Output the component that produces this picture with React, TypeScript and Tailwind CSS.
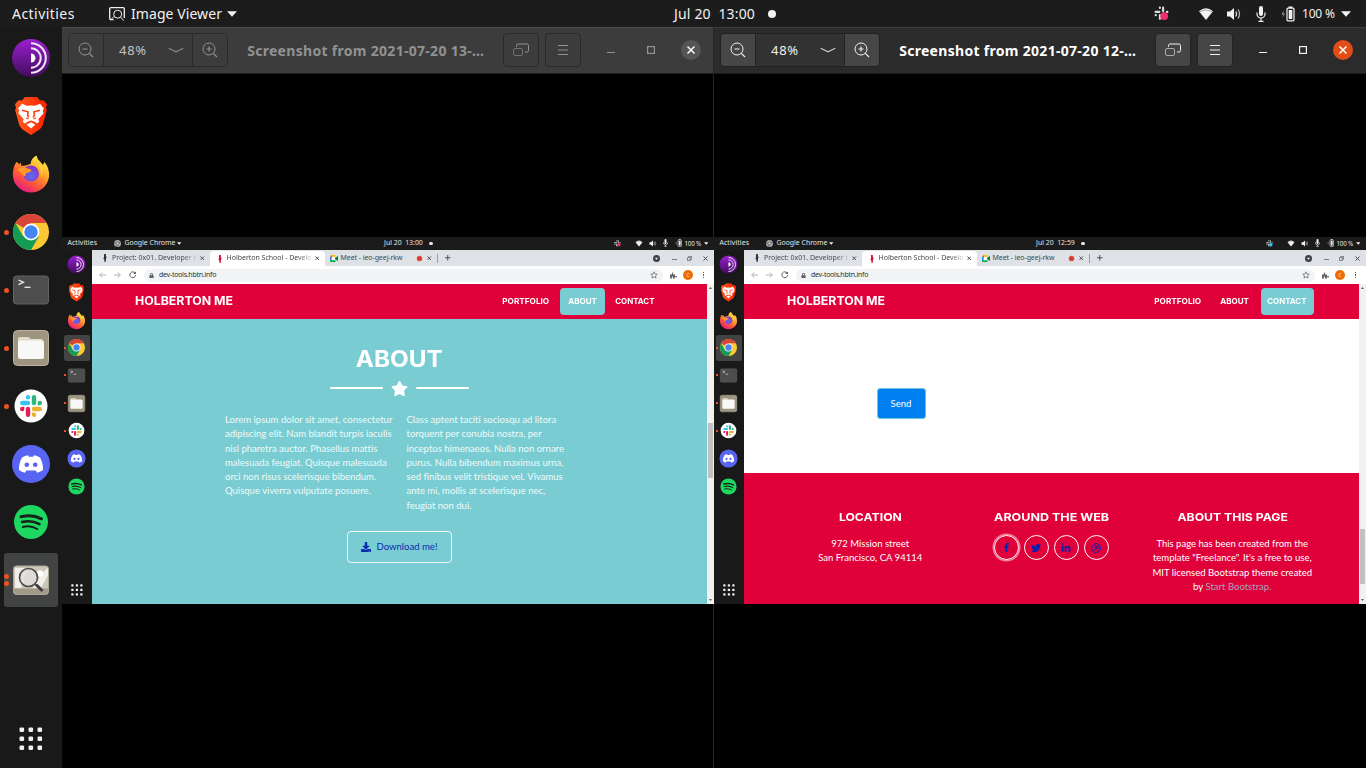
import type { ReactNode } from "react";
import {
  FaDownload,
  FaDribbble,
  FaFacebookF,
  FaLinkedinIn,
  FaLock,
  FaPuzzlePiece,
  FaStar,
  FaTwitter,
} from "react-icons/fa";

const U = 'font-["Noto_Sans",sans-serif]';
const M = 'font-["Inter",sans-serif] font-bold';

/* ---------- dock icons, all on a 40x40 grid ---------- */

function TorIcon() {
  return (
    <svg viewBox="0 0 40 40" className="size-full">
      <defs>
        <linearGradient id="tor" x1="0" y1="0" x2="0" y2="1">
          <stop offset="0" stopColor="#9a1fd0" />
          <stop offset="1" stopColor="#420c5d" />
        </linearGradient>
      </defs>
      <circle cx="20" cy="20" r="19" fill="url(#tor)" />
      <path d="M20 15.5a4.5 4.5 0 0 1 0 9z" fill="#fff" />
      <g fill="none" stroke="#f3e6fa" strokeWidth="2">
        <path d="M20 10.3a9.7 9.7 0 0 1 0 19.4" />
        <path d="M20 5.2a14.8 14.8 0 0 1 0 29.6" />
      </g>
    </svg>
  );
}

function BraveIcon() {
  return (
    <svg viewBox="0 0 40 40" className="size-full">
      <defs>
        <linearGradient id="brave" x1="0" x2="1">
          <stop offset="0" stopColor="#ff5a1f" />
          <stop offset="1" stopColor="#ff2000" />
        </linearGradient>
      </defs>
      <path
        d="M14 1h12l3 3.500 3.500-.3 3.500 4-1 3.500.8 2.500-4 14.500q-.8 3-3.300 4.700L20 39l-8.500-5.600Q9 31.700 8.200 28.700L4.200 14.200 5 11.700l-1-3.500 3.500-4 3.500.3z"
        fill="url(#brave)"
      />
      <path
        d="M20 9.500l4 .3 5-2 4 4.700-1.200 2 .8 2.700-5.300 6 .9 2.600-2 1.700-3-2.100L20 24.500l-3.200.9-3 2.100-2-1.700.9-2.600-5.300-6 .8-2.700-1.200-2 4-4.700 5 2z"
        fill="#fff"
      />
      <path d="M20 26.200l4.500 2.300-4.500 4-4.500-4z" fill="#fff" />
      <g fill="none" stroke="#ff4216" strokeWidth="1.700">
        <path d="M11 14.300l6 1.500-.3 3.200 1 2.500M29 14.300l-6 1.500.3 3.200-1 2.500" />
        <path d="M14.800 22l2.700 1M25.200 22l-2.700 1" strokeWidth="1.200" />
      </g>
    </svg>
  );
}

function FirefoxIcon() {
  return (
    <svg viewBox="0 0 40 40" className="size-full">
      <defs>
        <linearGradient id="fox" x1="0.85" y1="0.05" x2="0.25" y2="1">
          <stop offset="0" stopColor="#fff44f" />
          <stop offset="0.35" stopColor="#ffa72a" />
          <stop offset="0.65" stopColor="#ff5a36" />
          <stop offset="1" stopColor="#e3158a" />
        </linearGradient>
        <radialGradient id="globe" cx="0.5" cy="0.65" r="0.6">
          <stop offset="0" stopColor="#5c6cf0" />
          <stop offset="1" stopColor="#8a35c8" />
        </radialGradient>
      </defs>
      <path
        d="M5.500 8q1.500.3 2.500 2.500l1.500-2 1 3.500 4-.5 5-1.500Q20 4 25.500 1.500q.5 3.500 3.500 6l3 3.500 1.500-3q5.500 7 4.500 15A18.200 18.200 0 0 1 1.800 21Q2 12 5.500 8z"
        fill="url(#fox)"
      />
      <circle cx="20" cy="19.500" r="8" fill="url(#globe)" />
      <path d="M6 16q4-3.500 9-2l5 1.500q1 .5-.5 2-2 1-4 1.500-1.500 1-1 3.500-4-1-5-5z" fill="#ff9a2b" />
      <path d="M19 11q5-2 8.500 1.500 4 4 2 10 4-6 1-12z" fill="#ffd23e" />
    </svg>
  );
}

function ChromeIcon() {
  return (
    <svg viewBox="0 0 40 40" className="size-full">
      <circle cx="20" cy="20" r="18" fill="#fcc934" />
      <path d="M20 20V11H35.600A18 18 0 0 0 4.400 11z" fill="#d8463a" />
      <path d="M4.400 11L12.200 24.500 20 20 27.800 24.500 20 38A18 18 0 0 1 4.400 11z" fill="#149c55" />
      <circle cx="20" cy="20" r="8.400" fill="#fff" />
      <circle cx="20" cy="20" r="6.700" fill="#4486f4" />
    </svg>
  );
}

function TerminalIcon() {
  return (
    <svg viewBox="0 0 40 40" className="size-full">
      <rect x="2.500" y="6" width="35" height="28" rx="3" fill="#4d4d4d" stroke="#636363" />
      <path d="M7.500 10l5 2.300-5 2.300" fill="none" stroke="#eee" strokeWidth="1.300" />
      <path d="M13.500 17.300h6" stroke="#eee" strokeWidth="1.300" />
    </svg>
  );
}

function FilesIcon() {
  return (
    <svg viewBox="0 0 40 40" className="size-full">
      <rect x="2.500" y="2.500" width="35" height="35" rx="4" fill="#9d9580" stroke="#bbb39e" />
      <path d="M7 12V11q0-2 2-2h8q2 0 2.500 2H30q2 0 2 2v2H7z" fill="#dfdccb" />
      <rect x="7" y="12.500" width="26" height="18.500" rx="2" fill="#f8f8f6" />
    </svg>
  );
}

function SlackIcon() {
  return (
    <svg viewBox="0 0 40 40" className="size-full">
      <circle cx="20" cy="20" r="16.500" fill="#fff" />
      <g strokeWidth="4.400" strokeLinecap="round">
        <path d="M11.200 17H17" stroke="#36c5f0" />
        <path d="M23 11.200V17" stroke="#2eb67d" />
        <path d="M23 23h5.800" stroke="#ecb22e" />
        <path d="M17 23v5.800" stroke="#e01e5a" />
      </g>
      <circle cx="17" cy="11.200" r="2.200" fill="#36c5f0" />
      <path d="M26.600 19.200V17a2.200 2.200 0 1 1 2.200 2.200z" fill="#2eb67d" />
      <path d="M20.800 26.600H23a2.200 2.200 0 1 1-2.200 2.200z" fill="#ecb22e" />
      <path d="M13.400 20.800V23a2.200 2.200 0 1 1-2.200-2.200z" fill="#e01e5a" />
    </svg>
  );
}

function DiscordIcon() {
  return (
    <svg viewBox="0 0 40 40" className="size-full">
      <circle cx="20" cy="20" r="19" fill="#5865f2" />
      <path
        d="M11 13.500Q14 11.500 17 11.300l.8 1.400h4.400l.8-1.400q3 .2 6 2.200Q32.300 19 32 26q-3 2.300-6 2.700L24.700 26.500h-9.400L14 28.700Q11 28.300 8 26 7.700 19 11 13.500z"
        fill="#fff"
      />
      <circle cx="15.800" cy="20.800" r="2.300" fill="#5865f2" />
      <circle cx="24.200" cy="20.800" r="2.300" fill="#5865f2" />
    </svg>
  );
}

function SpotifyIcon() {
  return (
    <svg viewBox="0 0 40 40" className="size-full">
      <circle cx="20" cy="20" r="17" fill="#1ed760" />
      <g fill="none" stroke="#15231a" strokeLinecap="round">
        <path d="M10 14.800q11-3 20.500 2" strokeWidth="3" />
        <path d="M11 20q9.500-2.500 17.500 2.200" strokeWidth="2.500" />
        <path d="M11.800 25q8-2 14.500 2" strokeWidth="2" />
      </g>
    </svg>
  );
}

function ViewerIcon() {
  return (
    <svg viewBox="0 0 40 40" className="size-full">
      <rect x="2.500" y="6" width="35" height="28.500" rx="3" fill="#cbc6b8" stroke="#aaa698" />
      <path d="M3 28.500h34V31a3 3 0 0 1-3 3H6a3 3 0 0 1-3-3z" fill="#a19a88" />
      <path d="M4 28V8h14l-8 20zM22 28l9-15 6-5v7l-7 13z" fill="#efeee9" />
      <circle cx="29" cy="13.500" r="3.200" fill="#fff" />
      <circle cx="17.500" cy="17.500" r="9" fill="#e0deda" fillOpacity="0.85" stroke="#4a4a4a" strokeWidth="1.600" />
      <path d="M24 24l2 2" stroke="#555" strokeWidth="2" />
      <path d="M26 25.500l4.500 4.500" stroke="#3c3c3c" strokeWidth="3" strokeLinecap="round" />
    </svg>
  );
}

function GridIcon() {
  return (
    <svg viewBox="0 0 24 24" className="size-full" fill="#f2f2f2">
      {[1, 10, 19].map((y) =>
        [1, 10, 19].map((x) => <rect key={`${x}-${y}`} x={x - 0.5} y={y - 0.5} width="4.600" height="4.600" rx="1.300" />),
      )}
    </svg>
  );
}

type DockApp = { name: string; icon: ReactNode; dots: number; active?: boolean };

const baseApps: DockApp[] = [
  { name: "tor", icon: <TorIcon />, dots: 0 },
  { name: "brave", icon: <BraveIcon />, dots: 0 },
  { name: "firefox", icon: <FirefoxIcon />, dots: 0 },
  { name: "chrome", icon: <ChromeIcon />, dots: 1 },
  { name: "terminal", icon: <TerminalIcon />, dots: 1 },
  { name: "files", icon: <FilesIcon />, dots: 1 },
  { name: "slack", icon: <SlackIcon />, dots: 1 },
  { name: "discord", icon: <DiscordIcon />, dots: 0 },
  { name: "spotify", icon: <SpotifyIcon />, dots: 0 },
];

const desktopApps: DockApp[] = [...baseApps, { name: "viewer", icon: <ViewerIcon />, dots: 2, active: true }];
const pageApps: DockApp[] = baseApps.map((a) => (a.name === "chrome" ? { ...a, active: true } : a));

function Dock() {
  return (
    <nav className="flex w-[62px] shrink-0 flex-col bg-[#191919] pt-[2px]">
      {desktopApps.map((a) => (
        <div key={a.name} className="flex h-[58px] items-center pl-1">
          <div className={`flex h-[54px] w-[54px] items-center rounded-[3px] ${a.active ? "bg-[#424444]" : ""}`}>
            <div className="flex w-[7px] flex-col items-start gap-[2px]">
              {Array.from({ length: a.dots }, (_, i) => (
                <i key={i} className="size-[5px] rounded-full bg-[#e95420]" />
              ))}
            </div>
            <div className="size-10 shrink-0">{a.icon}</div>
          </div>
        </div>
      ))}
      <div className="mt-auto mb-[17px] ml-[19px] size-6">
        <GridIcon />
      </div>
    </nav>
  );
}

function MiniDock() {
  return (
    <nav className="flex w-[29.500px] shrink-0 flex-col bg-[#191919] pt-[0.800px]">
      {pageApps.map((a) => (
        <div key={a.name} className="flex h-[27.700px] items-center pl-[2px]">
          <div className={`flex h-[26px] w-[26px] items-center rounded-[2px] ${a.active ? "bg-[#424444]" : ""}`}>
            <div className="flex w-[3px] flex-col items-start">
              {a.dots > 0 && <i className="size-[2px] bg-[#e95420]" />}
            </div>
            <div className="size-[19px] shrink-0">{a.icon}</div>
          </div>
        </div>
      ))}
      <div className="mt-auto mb-[8px] ml-[9px] size-3">
        <GridIcon />
      </div>
    </nav>
  );
}

/* ---------- status icons ---------- */

function Caret({ className }: { className: string }) {
  return (
    <svg viewBox="0 0 10 6" className={`shrink-0 ${className}`}>
      <path d="M0 .3h10L5 5.800z" fill="#f2f2f2" />
    </svg>
  );
}

function SlackTray({ className, dot }: { className: string; dot: string }) {
  return (
    <svg viewBox="0 0 14 14" className={className}>
      <g stroke="#dcdcdc" strokeWidth="2" strokeLinecap="round">
        <path d="M1.500 5.500H5M5.500 1.500v.3M8.500 1.500V5M12 5.500h.5M1.500 8.500h.3M5.500 8.500V12" />
      </g>
      <circle cx="9.500" cy="9.500" r="3.600" fill={dot} />
    </svg>
  );
}

function WifiIcon({ className }: { className: string }) {
  return (
    <svg viewBox="0 0 16 14" className={className}>
      <path d="M1 4.300Q8-2 15 4.300L8 13z" fill="#f2f2f2" />
      <path d="M2 4.800Q8 1.200 14 4.800" fill="none" stroke="#8a8a8a" strokeWidth=".7" />
    </svg>
  );
}

function VolumeIcon({ className }: { className: string }) {
  return (
    <svg viewBox="0 0 16 14" className={className}>
      <path d="M1 4.500h3L8 1v12L4 9.500H1z" fill="#f2f2f2" />
      <path d="M9.800 4.500q1.600 2.500 0 5" fill="none" stroke="#f2f2f2" strokeWidth="1.300" />
      <path d="M12 2.500q3 4.500 0 9" fill="none" stroke="#b5b5b5" strokeWidth="1.200" />
    </svg>
  );
}

function MicIcon({ className }: { className: string }) {
  return (
    <svg viewBox="0 0 10 16" className={className}>
      <rect x="3" y="0" width="4" height="10" rx="2" fill="#f2f2f2" />
      <path d="M1 6.500v1.500a4 4 0 0 0 8 0V6.500M5 12v3M2.500 15.300h5" fill="none" stroke="#f2f2f2" strokeWidth="1.200" />
    </svg>
  );
}

function BatteryIcon({ className }: { className: string }) {
  return (
    <svg viewBox="0 0 14 16" className={className}>
      <path d="M3 4L.5 8.500h1.800L1.500 12 4 7.500H2.300z" fill="#8f8f8f" />
      <rect x="6" y="2.200" width="7" height="12.600" rx="1" fill="none" stroke="#f2f2f2" strokeWidth="1.200" />
      <rect x="7.700" y="4" width="3.600" height="9" fill="#f2f2f2" />
      <rect x="7.500" y="0.500" width="4" height="1.500" fill="#f2f2f2" />
    </svg>
  );
}

function ViewerGlyph() {
  return (
    <svg viewBox="0 0 16 14" className="h-[14px] w-4" fill="none" stroke="#f2f2f2">
      <path d="M4.500 12.500H1.800a1.100 1.100 0 0 1-1.100-1.100V1.800A1.100 1.100 0 0 1 1.800.7h12.400a1.100 1.100 0 0 1 1.100 1.100V11" strokeWidth="1.300" />
      <circle cx="8.700" cy="7.200" r="4" />
      <path d="M11.500 10.200l3.300 3.200M3 11.500l2-2" />
    </svg>
  );
}

function TopBar() {
  return (
    <header className={`flex h-[27px] shrink-0 items-center bg-[#1c1c1c] text-[#f2f2f2] ${U}`}>
      <div className="flex w-[674px] shrink-0 items-center">
        <span className="ml-3 w-[97px] whitespace-pre text-[14px] tracking-[0.450px]">Activities</span>
        <ViewerGlyph />
        <span className="ml-[6px] w-[92px] whitespace-pre text-[14px] tracking-[0.070px]">Image Viewer</span>
        <Caret className="ml-1 h-[6px] w-[10px]" />
      </div>
      <div className="flex shrink-0 items-center">
        <span className="-mt-px w-[94px] whitespace-pre text-[14px] tracking-[0.170px]">{"Jul 20  13:00"}</span>
        <i className="size-2 shrink-0 rounded-full bg-[#f2f2f2]" />
      </div>
      <div className="flex flex-1 items-center justify-end">
        <SlackTray className="mr-[29px] size-[15px]" dot="#f02d6c" />
        <WifiIcon className="mr-[12px] h-[14px] w-4" />
        <VolumeIcon className="mr-[14px] h-[14px] w-4" />
        <MicIcon className="mr-[15px] h-4 w-[10px]" />
        <BatteryIcon className="mr-[7px] h-4 w-[14px]" />
        <span className="mr-[5px] w-[34px] whitespace-pre text-[12px] tracking-[-0.200px]">100 %</span>
        <Caret className="mr-[15px] h-[6px] w-[10px]" />
      </div>
    </header>
  );
}

/* ---------- window title bar ---------- */

function ZoomIcon({ plus }: { plus?: boolean }) {
  return (
    <svg viewBox="0 0 16 16" className="size-4" fill="none" stroke="currentColor">
      <circle cx="7" cy="7" r="6" />
      <path d="M11.300 11.300l3.700 3.700M4.500 7h5" strokeWidth="1.200" />
      {plus && <path d="M7 4.500v5" strokeWidth="1.200" />}
    </svg>
  );
}

function TitleBar({ title, focused }: { title: string; focused?: boolean }) {
  const btn = focused ? "border-[#222] bg-[#464646]" : "border-[#2a2a2a] bg-[#3c3c3c]";
  const fg = focused ? "text-[#f0f0f0]" : "text-[#929292]";
  return (
    <div
      className={`flex h-[46.500px] shrink-0 items-center border-t border-b border-b-[#1c1c1c] pl-[6px] ${U} ${
        focused ? "border-t-[#3d3d3d] bg-[#2b2b2b] pr-[6px]" : "border-t-[#4c4c4c] bg-[#3c3c3c] pr-[5px]"
      } ${fg}`}
    >
      <div
        className={`flex h-[34px] w-[160px] overflow-hidden rounded-[4px] border ${
          focused ? "border-[#222]" : "border-[#2a2a2a]"
        }`}
      >
        <div className={`flex w-[35px] items-center justify-center border-r ${btn}`}>
          <ZoomIcon />
        </div>
        <div className={`flex flex-1 items-center ${focused ? "bg-[#323232]" : "bg-[#3a3a3a] text-[#c4c4c4]"}`}>
          <span className="ml-[15px] w-[49px] whitespace-pre text-[13px] tracking-[0.700px]">48%</span>
          <svg viewBox="0 0 16 8" className="h-2 w-4" fill="none" stroke={focused ? "#c8c8c8" : "#8b8b8b"}>
            <path d="M.7 2.200L8 5.800l7.300-3.600" strokeWidth="1.100" />
          </svg>
        </div>
        <div className={`flex w-[35px] items-center justify-center border-l ${btn}`}>
          <ZoomIcon plus />
        </div>
      </div>
      <div
        className={`flex-1 pl-[1px] text-center whitespace-pre text-[14px] font-bold tracking-[0.300px] ${
          focused ? "text-white" : ""
        }`}
      >
        {title}
      </div>
      <div className="flex items-center">
        <div className={`mr-[6px] flex h-[34px] w-9 items-center justify-center rounded-[4px] border ${btn}`}>
          <svg viewBox="0 0 16 14" className="h-[14px] w-4" fill="none" stroke="currentColor">
            <path d="M3.500 4V2.500q0-1.500 1.500-1.500h9q1.500 0 1.500 1.500v5q0 1.500-1.500 1.500H12" />
            <rect x=".5" y="5.500" width="9" height="7" rx="1.500" opacity=".6" />
          </svg>
        </div>
        <div className={`mr-[26px] flex h-[34px] w-9 items-center justify-center rounded-[4px] border ${btn}`}>
          <svg viewBox="0 0 10 10" className="size-[10px]" stroke="currentColor">
            <path d="M0 .5h10M0 5h10M0 9.500h10" />
          </svg>
        </div>
        <svg viewBox="0 0 8 10" className="mr-8 h-[10px] w-2" stroke="currentColor">
          <path d="M0 7.500h8" />
        </svg>
        <svg viewBox="0 0 8 8" className="mr-[26.500px] size-2" fill="none" stroke="currentColor" strokeWidth="1.200">
          <rect x=".6" y=".6" width="6.800" height="6.800" />
        </svg>
        <div
          className={`mr-[7px] flex size-5 items-center justify-center rounded-full text-white ${
            focused ? "bg-[#e24c16]" : "bg-[#555]"
          }`}
        >
          <svg viewBox="0 0 8 8" className="size-2" stroke="currentColor" strokeWidth="1.500">
            <path d="M.5.5l7 7M7.500.5l-7 7" />
          </svg>
        </div>
      </div>
    </div>
  );
}

/* ---------- captured browser ---------- */

function MiniTopBar({ time, dot }: { time: string; dot: string }) {
  return (
    <div className={`flex h-[13px] shrink-0 items-center bg-[#1b1b1b] text-[6.900px] text-[#e4e4e4] ${U}`}>
      <div className="flex w-[322px] shrink-0 items-center">
        <span className="ml-[5.500px] w-[46.500px] whitespace-pre tracking-[0.080px]">Activities</span>
        <svg viewBox="0 0 10 10" className="size-[7px]">
          <circle cx="5" cy="5" r="5" fill="#a8a8a8" />
          <path d="M5 5L0 4M5 5l4.500-2M5 5L4 10" stroke="#444" />
          <circle cx="5" cy="5" r="2" fill="#ddd" stroke="#555" />
        </svg>
        <span className="ml-[3.500px] w-[52px] whitespace-pre">Google Chrome</span>
        <Caret className="h-[3px] w-[4.500px]" />
      </div>
      <div className="flex shrink-0 items-center">
        <span className="w-[45px] whitespace-pre">{time}</span>
        <i className="size-[3.500px] rounded-full bg-[#e8e8e8]" />
      </div>
      <div className="flex flex-1 items-center justify-end">
        <SlackTray className="mr-[14px] size-[7px]" dot={dot} />
        <WifiIcon className="mr-[5.500px] h-[7px] w-2" />
        <VolumeIcon className="mr-[6px] h-[7px] w-2" />
        <MicIcon className="mr-[7px] h-2 w-[5px]" />
        <BatteryIcon className="mr-[3px] h-2 w-[7px]" />
        <span className="mr-[1.500px] w-[17.500px] whitespace-pre text-[6.200px] tracking-[-0.200px]">100 %</span>
        <Caret className="mr-[6px] h-[3px] w-[4.500px]" />
      </div>
    </div>
  );
}

function X({ className }: { className: string }) {
  return (
    <svg viewBox="0 0 5 5" className={`shrink-0 ${className}`} stroke="#44484c" strokeWidth="1">
      <path d="M.5.5l4 4M4.500.5l-4 4" />
    </svg>
  );
}

function Seahorse({ fill }: { fill: string }) {
  return (
    <svg viewBox="0 0 4 8" className="h-2 w-1 shrink-0" fill={fill}>
      <path d="M1 0h1.800L3 2.500l.8 1-.8.7v2L2.500 8h-1L1.300 5.500.3 4.500 1 3.500z" />
    </svg>
  );
}

function TabStrip() {
  return (
    <div className={`flex h-4 shrink-0 items-center bg-[#dee1e6] text-[7px] text-[#45494d] ${U}`}>
      <div className="flex w-[118px] items-center">
        <span className="ml-[11.500px]" />
        <Seahorse fill="#333" />
        <span className="ml-[5px] w-[88px] whitespace-pre [mask-image:linear-gradient(to_right,#000_80%,transparent_98%)]">
          Project: 0x01. Developer t
        </span>
        <X className="size-[4.500px]" />
      </div>
      <div className="mt-px flex h-[15px] w-[115px] items-center rounded-t-[4px] bg-white">
        <span className="ml-[8px]" />
        <Seahorse fill="#d6123c" />
        <span className="ml-[5px] w-[88px] whitespace-pre tracking-[-0.018px] [mask-image:linear-gradient(to_right,#000_80%,transparent_100%)]">
          Holberton School - Develo
        </span>
        <X className="size-[4.500px]" />
      </div>
      <svg viewBox="0 0 8 7" className="ml-[5px] h-[7px] w-2 shrink-0">
        <path d="M1 1h4v5H1z" fill="#fff" />
        <path d="M0 2l2-2v2z" fill="#ea4335" />
        <path d="M2 0h3.500v1.800H2z" fill="#fbbc04" />
        <path d="M0 2h1.700v3.500H0z" fill="#2684fc" />
        <path d="M0 5.300h5.500V7H1Q0 7 0 6z" fill="#00ac47" />
        <path d="M5 3l3-2v5L5 4z" fill="#00832d" />
      </svg>
      <span className="ml-[3px] w-[76px] whitespace-pre tracking-[-0.070px]">Meet - ieo-geej-rkw</span>
      <i className="mr-[5.500px] size-[5px] shrink-0 rounded-full bg-[#dc3b30] ring-[0.500px] ring-[#eba09b]" />
      <X className="size-[4.500px]" />
      <span className="ml-[5px] h-[9px] w-px bg-[#9a9da1]" />
      <svg viewBox="0 0 6 6" className="ml-[7.500px] size-[5.500px]" stroke="#44484c">
        <path d="M0 3h6M3 0v6" />
      </svg>
      <div className="flex flex-1 items-center justify-end pr-[6px]">
        <svg viewBox="0 0 8 8" className="mr-3 size-[7px]">
          <circle cx="4" cy="4" r="4" fill="#3c4043" />
          <path d="M2 3h4L4 5.800z" fill="#dee1e6" />
        </svg>
        <span className="mt-[3px] mr-[10px] h-px w-[5px] bg-[#7a7d80]" />
        <svg viewBox="0 0 6 6" className="mr-[11px] size-[5px]" fill="none" stroke="#5c5f62">
          <path d="M2 1.500V.5h3.500v3.500h-1M.5 2h3.500v3.500H.5z" strokeWidth=".9" />
        </svg>
        <X className="size-[5px]" />
      </div>
    </div>
  );
}

function AddressBar() {
  return (
    <div className={`flex h-[18px] shrink-0 items-center bg-white text-[7px] text-[#303336] ${U}`}>
      <svg viewBox="0 0 7 6" className="ml-[7px] h-[6px] w-[7px]" fill="none" stroke="#a9abae" strokeWidth=".9">
        <path d="M7 3H.7M3.300.4L.7 3l2.600 2.600" />
      </svg>
      <svg viewBox="0 0 7 6" className="ml-[8.500px] h-[6px] w-[7px]" fill="none" stroke="#a9abae" strokeWidth=".9">
        <path d="M0 3h6.300M3.700.4L6.300 3 3.700 5.600" />
      </svg>
      <svg viewBox="0 0 8 8" className="ml-[8px] size-[7.500px]" fill="none" stroke="#55585c" strokeWidth="1">
        <path d="M6.600 2.300A3.100 3.100 0 1 0 7.100 4.300" />
        <path d="M7.300.5v2.700H4.600z" fill="#55585c" stroke="none" />
      </svg>
      <div className="ml-[7px] flex h-[13px] w-[519px] items-center rounded-full bg-[#f1f3f4]">
        <FaLock className="ml-[5.500px] size-[5px] text-[#5f6368]" />
        <span className="ml-[5px] flex-1 whitespace-pre tracking-[-0.260px]">dev-tools.hbtn.info</span>
        <svg viewBox="0 0 24 24" className="mr-[4.500px] size-2" fill="none" stroke="#5f6368" strokeWidth="2.200">
          <path d="M12 2.500l2.900 6.300 6.800.8-5 4.700 1.300 6.800-6-3.400-6 3.400 1.300-6.800-5-4.700 6.800-.8z" />
        </svg>
      </div>
      <FaPuzzlePiece className="ml-[7px] size-[7px] text-[#5f6368]" />
      <span className="ml-[6.500px] flex size-[10px] items-center justify-center rounded-full bg-[#ef6c00] text-[5px] leading-none text-[#fce3cf]">
        C
      </span>
      <span className="ml-[10px] flex flex-col gap-[1.200px]">
        <i className="size-[1.200px] bg-[#5f6368]" />
        <i className="size-[1.200px] bg-[#5f6368]" />
        <i className="size-[1.200px] bg-[#5f6368]" />
      </span>
    </div>
  );
}

function SiteNav({ active }: { active: "ABOUT" | "CONTACT" }) {
  const pill = (name: string) => (name === active ? "bg-[#79cdd2]" : "");
  const item = "flex h-[27px] items-center justify-center rounded-[4px] whitespace-pre";
  return (
    <div className={`flex h-[35px] shrink-0 items-center bg-[#e0003a] ${M}`}>
      <div className="ml-[43px] flex flex-1">
        <span className="origin-left scale-x-[1.072] whitespace-pre text-[11.500px]">HOLBERTON ME</span>
      </div>
      <div className="mr-[45px] flex gap-[3.800px] text-[7.600px]">
        <span className={`${item} w-[62px]`}>
          <span className="scale-x-[1.080]">PORTFOLIO</span>
        </span>
        <span className={`${item} w-[44.500px] ${pill("ABOUT")}`}>
          <span className="scale-x-[1.060]">ABOUT</span>
        </span>
        <span className={`${item} w-[53.500px] ${pill("CONTACT")}`}>
          <span className="scale-x-[1.040]">CONTACT</span>
        </span>
      </div>
    </div>
  );
}

const aboutLeft = [
  "Lorem ipsum dolor sit amet, consectetur",
  "adipiscing elit. Nam blandit turpis iaculis",
  "nisl pharetra auctor. Phasellus mattis",
  "malesuada feugiat. Quisque malesuada",
  "orci non risus scelerisque bibendum.",
  "Quisque viverra vulputate posuere.",
];
const aboutRight = [
  "Class aptent taciti sociosqu ad litora",
  "torquent per conubia nostra, per",
  "inceptos himenaeos. Nulla non ornare",
  "purus. Nulla bibendum maximus urna,",
  "sed finibus velit tristique vel. Vivamus",
  "ante mi, mollis at scelerisque nec,",
  "feugiat non dui.",
];

function Lines({ lines }: { lines: string[] }) {
  return (
    <div className="flex flex-col">
      {lines.map((l) => (
        <span key={l} className="h-[14.310px] whitespace-pre leading-[14.310px]">
          {l}
        </span>
      ))}
    </div>
  );
}

const pageText = 'font-["Lato",sans-serif] text-[9.540px] text-white [font-variant-ligatures:none]';

function AboutPage() {
  return (
    <div className={`flex flex-1 flex-col items-center bg-[#79cdd2] ${pageText}`}>
      <h2 className={`mt-[26px] h-[28px] scale-x-[1.080] text-[22.500px] leading-[28px] ${M}`}>ABOUT</h2>
      <div className="mt-[6px] flex h-[18px] items-center gap-2">
        <span className="h-[2px] w-[53px] rounded-full bg-white" />
        <FaStar className="size-[17px]" />
        <span className="h-[2px] w-[53px] rounded-full bg-white" />
      </div>
      <div className="mt-[16px] flex text-[#eff9fa]">
        <div className="w-[181.500px]">
          <Lines lines={aboutLeft} />
        </div>
        <div className="w-[167px]">
          <Lines lines={aboutRight} />
        </div>
      </div>
      <div className="mt-[18px] flex h-[32px] w-[105px] items-center justify-center rounded-[4px] border border-[#eef9fa] text-[#0b2bb0]">
        <FaDownload className="mr-[5.500px] size-[10px]" />
        Download me!
      </div>
    </div>
  );
}

const ring = "flex size-[25px] items-center justify-center rounded-full border border-white";
const h4 = `h-[15px] mb-[12px] text-[11px] leading-[15px] ${M}`;

function ContactPage() {
  return (
    <div className={`flex flex-1 flex-col bg-white ${pageText}`}>
      <div className="flex h-[154px] shrink-0 items-start">
        <div className="mt-[69px] ml-[133px] flex h-[31px] w-[49px] items-center justify-center rounded-[3px] border border-[#6cc5dc] bg-[#0080f0] pt-px">
          Send
        </div>
      </div>
      <div className="flex flex-1 justify-center bg-[#e0003a] pt-[37px] text-center">
        <div className="flex w-[181px] flex-col items-center">
          <h4 className={`scale-x-[1.110] ${h4}`}>LOCATION</h4>
          <Lines lines={["972 Mission street", "San Francisco, CA 94114"]} />
        </div>
        <div className="flex w-[181px] flex-col items-center">
          <h4 className={`scale-x-[1.137] ${h4}`}>AROUND THE WEB</h4>
          <div className="-mt-[2px] flex gap-[5px] text-[#0b1fb0]">
            <span className={`${ring} ring-[1.500px] ring-[#f27f9c]`}>
              <FaFacebookF className="size-[9px]" />
            </span>
            <span className={ring}>
              <FaTwitter className="size-[10px]" />
            </span>
            <span className={ring}>
              <FaLinkedinIn className="size-[10px]" />
            </span>
            <span className={ring}>
              <FaDribbble className="size-[10px]" />
            </span>
          </div>
        </div>
        <div className="flex w-[181px] flex-col items-center">
          <h4 className={`scale-x-[1.112] ${h4}`}>ABOUT THIS PAGE</h4>
          <Lines
            lines={[
              "This page has been created from the",
              'template "Freelance". It\'s a free to use,',
              "MIT licensed Bootstrap theme created",
            ]}
          />
          <span className="leading-[14.310px]">
            by <span className="text-[#a3a6bc]">Start Bootstrap.</span>
          </span>
        </div>
      </div>
    </div>
  );
}

function Scrollbar({ low }: { low?: boolean }) {
  return (
    <div className="flex w-[7px] shrink-0 flex-col items-center bg-[#f1f1f1]">
      <svg viewBox="0 0 4 3" className="mt-[3px] h-[2px] w-[3px] shrink-0">
        <path d="M0 3h4L2 0z" fill="#505050" />
      </svg>
      <span className={`h-[55px] w-[5.500px] bg-[#c1c1c1] ${low ? "mt-[240px]" : "mt-[134px]"}`} />
      <svg viewBox="0 0 4 3" className="mt-auto mb-[3px] h-[2px] w-[3px] shrink-0">
        <path d="M0 0h4L2 3z" fill="#505050" />
      </svg>
    </div>
  );
}

function ViewerWindow({ title, focused, time, children, active }: {
  title: string;
  focused?: boolean;
  time: string;
  active: "ABOUT" | "CONTACT";
  children: ReactNode;
}) {
  return (
    <section className={`flex w-[652px] shrink-0 flex-col bg-black ${focused ? "" : "border-r border-[#262626]"}`}>
      <TitleBar title={title} focused={focused} />
      <div className={`flex flex-1 flex-col pt-[163.500px] ${focused ? "" : "-mr-px"}`}>
        <MiniTopBar time={time} dot={focused ? "#1fd2f0" : "#f02d6c"} />
        <div className="flex h-[354px]">
          <MiniDock />
          <div className="flex min-w-0 flex-1 flex-col">
            <TabStrip />
            <AddressBar />
            <div className="flex flex-1">
              <div className="flex min-w-0 flex-1 flex-col">
                <SiteNav active={active} />
                {children}
              </div>
              <Scrollbar low={focused} />
            </div>
          </div>
        </div>
      </div>
    </section>
  );
}

export default function Desktop() {
  return (
    <div className="flex h-[768px] w-[1366px] flex-col overflow-hidden bg-black text-white">
      <TopBar />
      <div className="flex min-h-0 flex-1">
        <Dock />
        <ViewerWindow title="Screenshot from 2021-07-20 13-…" time="Jul 20  13:00" active="ABOUT">
          <AboutPage />
        </ViewerWindow>
        <ViewerWindow title="Screenshot from 2021-07-20 12-…" time="Jul 20  12:59" active="CONTACT" focused>
          <ContactPage />
        </ViewerWindow>
      </div>
    </div>
  );
}
